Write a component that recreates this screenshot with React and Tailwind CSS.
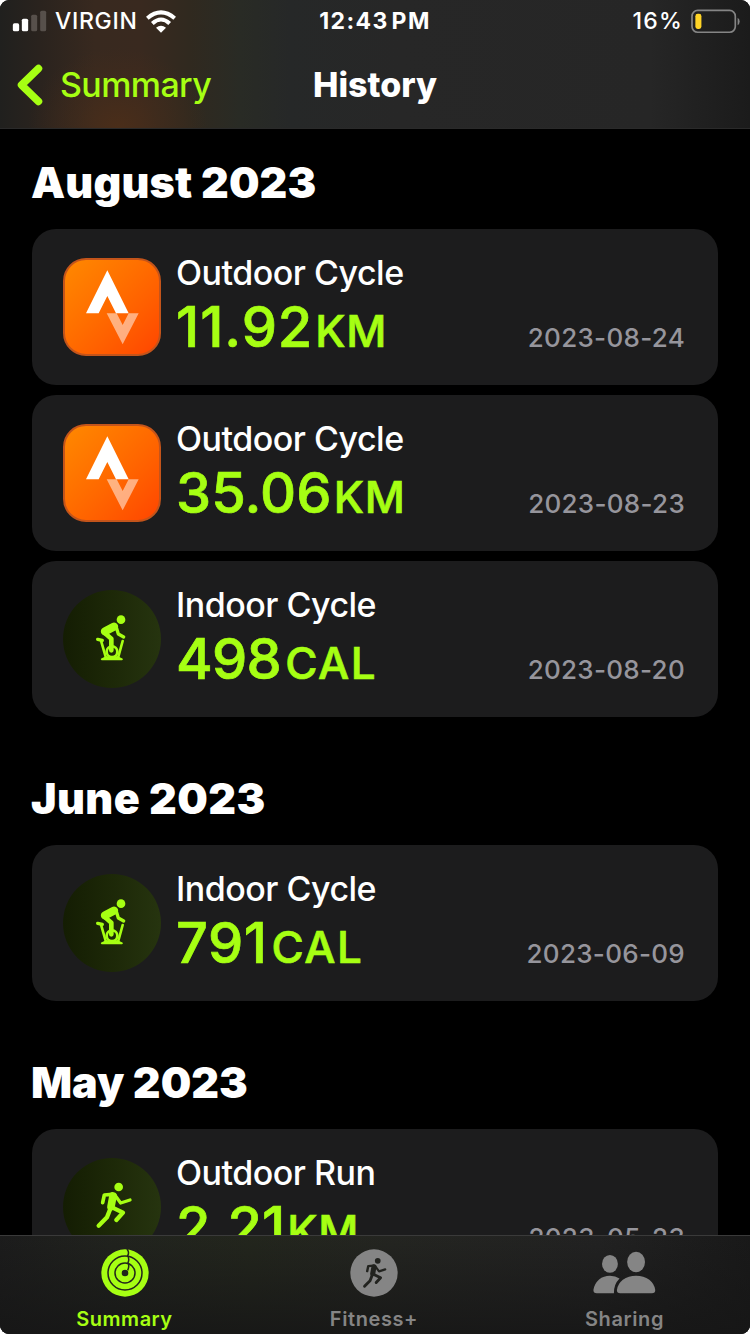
const months = [
    {
        title: "August 2023",
        tracking: "tracking-[0.15px]",
        workouts: [
            { type: "strava", name: "Outdoor Cycle", value: "11.92", unit: "KM", date: "2023-08-24", tracking: "tracking-[0.9px]" },
            { type: "strava", name: "Outdoor Cycle", value: "35.06", unit: "KM", date: "2023-08-23", tracking: "tracking-[0.1px]" },
            { type: "bike", name: "Indoor Cycle", value: "498", unit: "CAL", date: "2023-08-20", tracking: "tracking-[-0.7px]" },
        ],
    },
    {
        title: "June 2023",
        tracking: "tracking-[0.4px]",
        workouts: [
            { type: "bike", name: "Indoor Cycle", value: "791", unit: "CAL", date: "2023-06-09", tracking: "tracking-[0.5px]" },
        ],
    },
    {
        title: "May 2023",
        tracking: "tracking-[0px]",
        workouts: [
            { type: "run", name: "Outdoor Run", value: "2.21", unit: "KM", date: "2023-05-23", tracking: "tracking-[0px]" },
        ],
    },
];

function StravaIcon() {
    return (
        <div className="size-[98px] shrink-0 rounded-[23px] border-2 border-[#c4541a] bg-linear-to-br from-[#ff8800] to-[#ff4400]">
            <svg viewBox="6 6 282 282" className="size-full">
                <path d="M133 37 L69 166 H107 L133 114 L159 166 H197 Z" fill="#fff" />
                <path d="M131 166 H161 L179 201 L197 166 H227 L179 259 Z" fill="#fff" opacity="0.5" />
            </svg>
        </div>
    );
}

function Runner() {
    return (
        <g fill="none" stroke="currentColor" strokeLinecap="round" strokeLinejoin="round">
            <circle cx="167" cy="87" r="13" fill="currentColor" stroke="none" />
            <path d="M150 114 L144 146" strokeWidth="23" />
            <path d="M148 109 L124 111 L119 134" strokeWidth="11" />
            <path d="M156 112 L173 135 L201 126" strokeWidth="10" />
            <path d="M147 148 L180 164 L160 186" strokeWidth="13" />
            <path d="M142 152 L132 178 L107 203" strokeWidth="13" />
        </g>
    );
}

function Bike() {
    return (
        <g fill="none" stroke="currentColor" strokeLinecap="round" strokeLinejoin="round">
            <circle cx="174" cy="89" r="13" fill="currentColor" stroke="none" />
            <path d="M153 110 L126 124" strokeWidth="25" />
            <path d="M159 109 L166 132 L182 141" strokeWidth="10" />
            <path d="M122 126 L145 146 L145 181" strokeWidth="14" />
            <path d="M104 148 L118 151" strokeWidth="10" />
            <path d="M114 152 L129 204 M179 153 L165 204" strokeWidth="8" />
            <circle cx="147" cy="185" r="16" strokeWidth="8" />
            <path d="M116 208 L130 201 H163 L177 208 Z" fill="currentColor" strokeWidth="5" />
        </g>
    );
}

function WorkoutIcon({ type }) {
    if (type === "strava") return <StravaIcon />;
    return (
        <div className="size-[98px] shrink-0 rounded-full bg-linear-to-r from-[#141d03] to-[#26340f] text-[#a6ff13]">
            <svg viewBox="0 0 294 294" className="size-full">
                {type === "bike" ? <Bike /> : <Runner />}
            </svg>
        </div>
    );
}

function WorkoutCard({ workout }) {
    return (
        <div className="flex h-[156px] shrink-0 items-start gap-[15px] rounded-[24px] bg-[#1c1c1d] pt-[28px] pr-[33px] pl-[31px]">
            <div className="pt-px">
                <WorkoutIcon type={workout.type} />
            </div>
            <div className="flex-1 whitespace-nowrap">
                <div className="h-[32px] text-[34px] leading-[32px] font-medium tracking-[-0.5px]">{workout.name}</div>
                <div className="h-[76px] text-[56px] leading-[76px] font-medium text-[#a6ff13] [-webkit-text-stroke:0.7px_#a6ff13]">
                    <span className={workout.tracking}>{workout.value}</span>
                    <span className={`text-[44px] ${workout.unit === "KM" ? "ml-[2px] tracking-[0.7px]" : "ml-[4px] tracking-[1.5px]"}`}>{workout.unit}</span>
                </div>
            </div>
            <div className="mt-[65px] text-[26px] leading-8 font-medium tracking-[0.3px] text-[#96959c]">{workout.date}</div>
        </div>
    );
}

function StatusBar() {
    return (
        <div className="grid h-[42px] grid-cols-3 items-center text-[23px] leading-[30px]">
            <div className="flex items-center pl-[12px]">
                <svg viewBox="36 26 104 66" className="h-[22px] w-[35px]">
                    <rect x="38" y="66" width="19" height="24" rx="5" fill="#fff" />
                    <rect x="65" y="52" width="19" height="38" rx="5" fill="#fff" />
                    <rect x="93" y="40" width="18" height="50" rx="5" fill="#57504b" />
                    <rect x="120" y="28" width="18" height="62" rx="5" fill="#57504b" />
                </svg>
                <span className="ml-[8px] font-medium tracking-[0.7px]">VIRGIN</span>
                <svg viewBox="440 26 90 68" className="ml-[8px] h-[23px] w-[30px]">
                    <g fill="none" stroke="#fff" strokeWidth="12">
                        <path d="M444 50 Q485 15 526 50" />
                        <path d="M459 66 Q485 42 511 66" />
                    </g>
                    <path d="M470 79 Q485 66 500 79 L485 94 Z" fill="#fff" />
                </svg>
            </div>
            <div className="text-center font-bold tracking-[1.4px] [word-spacing:-4px]">12:43 PM</div>
            <div className="flex items-center justify-end pr-[10px] font-medium">
                <span className="tracking-[1.2px]">16%</span>
                <svg viewBox="572 22 146 74" className="ml-[8px] h-[25px] w-[49px]">
                    <rect x="575" y="26" width="129" height="65" rx="17" fill="none" stroke="#858585" strokeWidth="5" />
                    <rect x="585" y="36" width="18" height="45" rx="7" fill="#ffd426" />
                    <path d="M711 48 Q717 51 717 59 Q717 67 711 70 Z" fill="#858585" />
                </svg>
            </div>
        </div>
    );
}

function Header() {
    return (
        <header className="h-[129px] shrink-0 border-b border-[#2a2a2a] bg-[radial-gradient(ellipse_90px_80px_at_118px_128px,rgba(76,46,25,0.9)_0%,rgba(76,46,25,0.4)_45%,rgba(76,46,25,0)_100%),linear-gradient(90deg,#20201e_0px,#2a231e_40px,#38291f_95px,#39291f_140px,#30291f_190px,#292b25_240px,#262828_290px,#272727_400px,#262626_650px,#1b1b1b_750px)]">
            <StatusBar />
            <div className="grid h-[86px] grid-cols-3 items-center text-[34px] leading-10">
                <div className="flex items-center pl-[17px] text-[#a6ff13]">
                    <svg viewBox="0 0 26 42" className="h-[42px] w-[26px]">
                        <path d="M21.500 4.500 L4.500 21 L21.500 37.500" fill="none" stroke="currentColor" strokeWidth="7.500" strokeLinecap="round" strokeLinejoin="round" />
                    </svg>
                    <span className="ml-[17px] font-medium tracking-[-0.6px]">Summary</span>
                </div>
                <h1 className="text-center font-extrabold">History</h1>
            </div>
        </header>
    );
}

function RingsIcon() {
    return (
        <svg viewBox="-72 -72 144 144" className="size-12">
            <circle r="71" fill="#a6ff13" />
            <g fill="none" stroke="#22261c" strokeWidth="4.500">
                <circle r="51" />
                <circle r="30" />
                <path d="M6 -72 Q14 -62 8 -52 Q14 -42 9 -31 Q14 -20 8 -8" />
            </g>
            <circle r="10" fill="#22261c" />
        </svg>
    );
}

function FitnessIcon() {
    return (
        <svg viewBox="0 0 144 144" className="size-12 text-[#22231f]">
            <circle cx="72" cy="72" r="71" fill="#858585" />
            <g transform="translate(-27 -22) scale(0.66)">
                <Runner />
            </g>
        </svg>
    );
}

function SharingIcon() {
    return (
        <svg viewBox="102 364 188 130" className="h-[43px] w-[63px]" fill="#858585">
            <ellipse cx="152" cy="403" rx="24" ry="27" />
            <ellipse cx="231" cy="397" rx="27" ry="31" />
            <path d="M112 492 Q102 492 102 482 Q104 464 119 450 Q133 439 152 439 Q169 439 181 447 Q163 465 164 492 Z" />
            <path d="M183 492 Q173 492 173 482 Q175 464 191 451 Q208 439 231 439 Q254 439 271 451 Q287 464 289 482 Q289 492 279 492 Z" />
        </svg>
    );
}

function TabBar() {
    return (
        <footer className="grid h-[99px] shrink-0 grid-cols-[249px_250px_251px] border-t border-[#3a3a3a] bg-[linear-gradient(180deg,transparent_0%,rgba(22,22,22,0.85)_100%),linear-gradient(90deg,#1c1c1c_0px,#21231e_110px,#23261d_250px,#242521_390px,#222222_600px,#191919_750px)] text-[20px] leading-6 font-semibold text-[#858585]">
            <div className="flex flex-col items-center pt-[13px] text-[#a6ff13]">
                <RingsIcon />
                <span className="mt-[10px] tracking-[0.5px]">Summary</span>
            </div>
            <div className="flex flex-col items-center pt-[13px]">
                <FitnessIcon />
                <span className="mt-[10px] tracking-[0.6px]">Fitness+</span>
            </div>
            <div className="flex flex-col items-center pt-[15px]">
                <SharingIcon />
                <span className="mt-[13px] tracking-[0.6px]">Sharing</span>
            </div>
        </footer>
    );
}

export default function App() {
    return (
        <div className="h-[1334px] w-[750px] bg-white">
            <div className="flex h-full flex-col overflow-hidden rounded-t-[9px] rounded-b-[9px] bg-black font-['Inter',sans-serif] text-white">
                <Header />
                <main className="flex min-h-0 flex-1 flex-col gap-7 overflow-hidden px-8">
                    {months.map((month) => (
                        <section key={month.title} className="flex shrink-0 flex-col gap-[10px]">
                            <h2 className={`-ml-px h-[90px] pt-[29px] text-[43px] leading-[48px] font-black ${month.tracking}`}>{month.title}</h2>
                            {month.workouts.map((workout) => (
                                <WorkoutCard key={workout.date} workout={workout} />
                            ))}
                        </section>
                    ))}
                </main>
                <TabBar />
            </div>
        </div>
    );
}
